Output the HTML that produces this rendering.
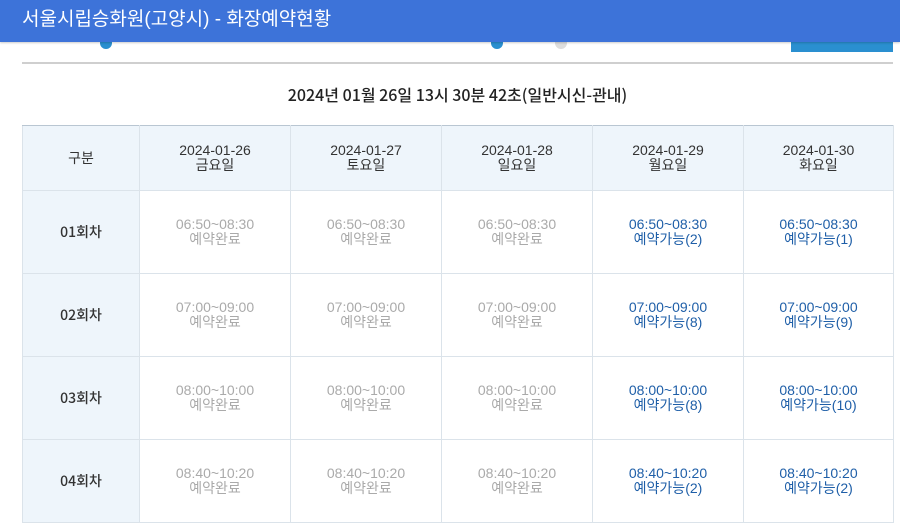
<!DOCTYPE html>
<html><head><meta charset="utf-8"><style>
*{margin:0;padding:0;box-sizing:border-box}
body{width:900px;height:514px;overflow:hidden;background:#fff;font-family:"Liberation Sans","Noto Sans CJK KR",sans-serif;position:relative}
.hdr{position:absolute;left:0;top:0;width:900px;height:42px;background:#3d73d9;color:#fff;font-size:19px;line-height:40px;padding-left:22px;z-index:2;box-shadow:0 1px 2px rgba(0,0,0,.2)}
.btn{position:absolute;left:791px;top:38px;width:102px;height:14px;background:#2a8fd0}
.rad{position:absolute;top:37px;width:12px;height:12px;border-radius:50%}
.line{position:absolute;left:22px;top:62px;width:871px;height:2px;background:#cfcfcf}
.title{position:absolute;left:0;width:915px;top:84px;text-align:center;font-size:16px;color:#222;font-weight:500;font-family:"Noto Sans CJK KR",sans-serif;line-height:20px}
table{position:absolute;left:22px;top:125px;border-collapse:collapse;width:871px;table-layout:fixed}
td,th{border:1px solid #dbe3ea;text-align:center;font-size:14px;line-height:15px}
tr:first-child th{border-top:1px solid #b9c6d2;background:#eef5fb;height:65px;font-weight:normal;color:#333}
th.r{background:#eef5fb;color:#333;font-weight:500;font-size:14px;font-family:"Noto Sans CJK KR",sans-serif}
td{height:83px;color:#aaa}
td.b{color:#1f5fa8}
</style></head><body>
<div class="hdr">서울시립승화원(고양시) - 화장예약현황</div>
<div class="rad" style="left:100px;background:#2a8fd0"></div>
<div class="rad" style="left:491px;background:#2a8fd0"></div>
<div class="rad" style="left:555px;background:#ddd"></div>
<div class="btn"></div>
<div class="line"></div>
<div class="title">2024년 01월 26일 13시 30분 42초(일반시신-관내)</div>
<table>
<colgroup><col style="width:117px"><col style="width:151px"><col style="width:151px"><col style="width:151px"><col style="width:151px"><col style="width:150px"></colgroup>
<tr><th>구분</th><th>2024-01-26<br>금요일</th><th>2024-01-27<br>토요일</th><th>2024-01-28<br>일요일</th><th>2024-01-29<br>월요일</th><th>2024-01-30<br>화요일</th></tr>
<tr><th class="r">01회차</th><td>06:50~08:30<br>예약완료</td><td>06:50~08:30<br>예약완료</td><td>06:50~08:30<br>예약완료</td><td class="b">06:50~08:30<br>예약가능(2)</td><td class="b">06:50~08:30<br>예약가능(1)</td></tr>
<tr><th class="r">02회차</th><td>07:00~09:00<br>예약완료</td><td>07:00~09:00<br>예약완료</td><td>07:00~09:00<br>예약완료</td><td class="b">07:00~09:00<br>예약가능(8)</td><td class="b">07:00~09:00<br>예약가능(9)</td></tr>
<tr><th class="r">03회차</th><td>08:00~10:00<br>예약완료</td><td>08:00~10:00<br>예약완료</td><td>08:00~10:00<br>예약완료</td><td class="b">08:00~10:00<br>예약가능(8)</td><td class="b">08:00~10:00<br>예약가능(10)</td></tr>
<tr><th class="r">04회차</th><td>08:40~10:20<br>예약완료</td><td>08:40~10:20<br>예약완료</td><td>08:40~10:20<br>예약완료</td><td class="b">08:40~10:20<br>예약가능(2)</td><td class="b">08:40~10:20<br>예약가능(2)</td></tr>
</table>
</body></html>
